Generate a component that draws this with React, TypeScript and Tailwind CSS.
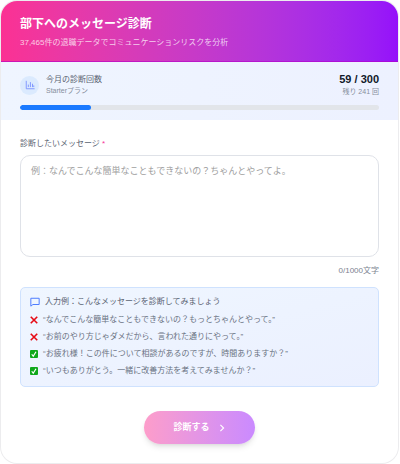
import { useState } from "react";

const MAX_LENGTH = 1000;
const USED = 59;
const LIMIT = 300;

const EXAMPLES = [
  { good: false, text: "“なんでこんな簡単なこともできないの？もっとちゃんとやって。”" },
  { good: false, text: "“お前のやり方じゃダメだから、言われた通りにやって。”" },
  { good: true, text: "“お疲れ様！この件について相談があるのですが、時間ありますか？”" },
  { good: true, text: "“いつもありがとう。一緒に改善方法を考えてみませんか？”" },
];

function ChartIcon() {
  return (
    <svg viewBox="0 0 24 24" className="size-[10px]" fill="none" stroke="#7c93ff" strokeWidth="2.2" aria-hidden="true">
      <path d="M3 2v19h20M8 17v-6M13 17V5M18 17V9M21 17v-4" />
    </svg>
  );
}

function MessageIcon() {
  return (
    <svg viewBox="0 0 24 24" className="size-[10px] shrink-0" fill="none" stroke="#4f7dff" strokeWidth="2.4" strokeLinejoin="round" aria-hidden="true">
      <path d="M2 3h20v15H7l-5 4z" />
    </svg>
  );
}

function CrossMark() {
  return (
    <svg viewBox="0 0 16 16" className="size-2 shrink-0" stroke="#e60a14" strokeWidth="3.2" aria-hidden="true">
      <path d="M1.5 1.5l13 13M14.5 1.5l-13 13" />
    </svg>
  );
}

function CheckMark() {
  return (
    <svg viewBox="0 0 16 16" className="size-2 shrink-0" fill="none" aria-hidden="true">
      <rect width="16" height="16" rx="2" fill="#10a81c" />
      <path d="M3.5 8.5l3 4L12 3.5" stroke="#fff" strokeWidth="2.4" />
    </svg>
  );
}

function Header() {
  return (
    <header className="border-b border-[#b400c8]/60 bg-linear-to-r from-[#fb3193] to-[#9510fa] px-[19px] pt-[15px] pb-[11px]">
      <h1 className="text-[12px] leading-4 font-bold text-white">部下へのメッセージ診断</h1>
      <p className="mt-1 text-[8px] leading-[14px] text-white/75">
        37,465件の退職データでコミュニケーションリスクを分析
      </p>
    </header>
  );
}

function Usage() {
  return (
    <section className="bg-linear-to-r from-[#eff5ff] to-[#edf1ff] px-[19px] py-[10px]">
      <div className="flex items-center justify-between">
        <div className="flex items-center gap-[7px]">
          <span className="flex size-[19px] items-center justify-center rounded-full bg-[#dbeafe]">
            <ChartIcon />
          </span>
          <div>
            <p className="text-[8px] leading-3 text-[#5a6372]">今月の診断回数</p>
            <p className="text-[7px] leading-[10px] text-[#868e9c]">Starterプラン</p>
          </div>
        </div>
        <div className="text-right">
          <p className="text-[11px] leading-[14px] font-bold text-[#101828]">
            {USED} / {LIMIT}
          </p>
          <p className="text-[7px] leading-3 text-[#868e9c]">残り {LIMIT - USED} 回</p>
        </div>
      </div>
      <div className="mt-[7px] h-[5px] overflow-hidden rounded-full bg-[#e2e5ea]">
        <div className="h-full rounded-full bg-[#1b7aff]" style={{ width: `${(USED / LIMIT) * 100}%` }} />
      </div>
    </section>
  );
}

export default function App() {
  const [message, setMessage] = useState("");

  return (
    <div className="bg-white py-px pr-0.5 pl-px font-['Liberation_Sans','Noto_Sans_CJK_JP',sans-serif]">
      <main className="overflow-hidden rounded-2xl bg-white ring-1 ring-[#ececee]">
        <Header />
        <Usage />
        <form className="px-[19px] pt-[18px] pb-[19px]" onSubmit={(e) => e.preventDefault()}>
          <label htmlFor="message" className="block text-[8px] leading-3 text-[#5a6372]">
            診断したいメッセージ <span className="text-[#f6339a]">*</span>
          </label>
          <textarea
            id="message"
            value={message}
            maxLength={MAX_LENGTH}
            onChange={(e) => setMessage(e.target.value)}
            placeholder="例：なんでこんな簡単なこともできないの？ちゃんとやってよ。"
            className="mt-[5px] block h-[102px] w-full resize-none rounded-[10px] border border-[#dfe2e8] px-[10px] py-2 text-[9px] leading-[14px] text-[#1e2939] outline-none placeholder:text-[#a0a0a0]"
          />
          <p className="mt-2 text-right text-[8px] leading-3 text-[#7b8290]">
            {message.length}/{MAX_LENGTH}文字
          </p>

          <section className="mt-[10px] rounded-[5px] border border-[#cfe2fe] bg-linear-to-br from-[#eff6ff] to-[#ebf0ff] px-[9px] pt-[7px] pb-[9px]">
            <h2 className="flex items-center gap-[5px] text-[8px] leading-[14px] text-[#5a6372]">
              <MessageIcon />
              入力例：こんなメッセージを診断してみましょう
            </h2>
            <ul className="mt-[5px] flex flex-col gap-[5px]">
              {EXAMPLES.map(({ good, text }) => (
                <li key={text} className="flex items-center gap-[5px] text-[8px] leading-3 text-[#6a7282]">
                  {good ? <CheckMark /> : <CrossMark />}
                  {text}
                </li>
              ))}
            </ul>
          </section>

          <div className="mt-6 flex justify-center">
            <button
              type="submit"
              className="flex h-[33px] items-center gap-2 rounded-full bg-linear-to-r from-[#fd9dca] to-[#ca8aff] px-[29px] text-[9px] font-bold text-white shadow-md shadow-black/10"
            >
              診断する
              <svg viewBox="0 0 10 10" className="size-2" fill="none" stroke="currentColor" strokeWidth="1.4" aria-hidden="true">
                <path d="M3 1l4 4-4 4" />
              </svg>
            </button>
          </div>
        </form>
      </main>
    </div>
  );
}
